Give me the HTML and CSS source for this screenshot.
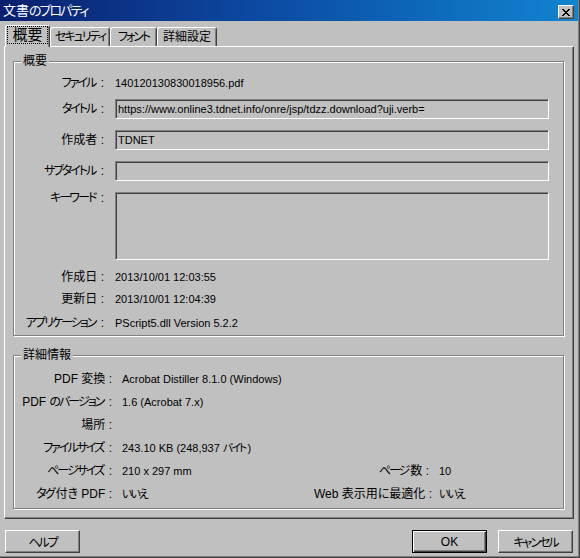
FILE: index.html
```html
<!DOCTYPE html>
<html lang="ja">
<head>
<meta charset="utf-8">
<title>文書のプロパティ</title>
<link rel="stylesheet" href="styles.css">
</head>
<body>
<div class="window">
  <div class="titlebar">
    <span class="title">文書<span class="k">のプロパティ</span></span>
    <span class="close"><svg width="8" height="7" viewBox="0 0 8 7" shape-rendering="crispEdges"><path fill="#000" d="M0 0h2v1H0z M6 0h2v1H6z M1 1h2v1H1z M5 1h2v1H5z M2 2h4v1H2z M3 3h2v1H3z M2 4h4v1H2z M1 5h2v1H1z M5 5h2v1H5z M0 6h2v1H0z M6 6h2v1H6z"/></svg></span>
  </div>
  <div class="content">
    <div class="tabs">
      <div class="tab t1 active"><span class="focus">概要</span></div>
      <div class="tab t2"><span class="k">セキュリティ</span></div>
      <div class="tab t3"><span class="k">フォント</span></div>
      <div class="tab t4">詳細設定</div>
    </div>
    <div class="panel">
      <fieldset class="group g1">
        <legend>概要</legend>
        <div class="row"><span class="lbl"><span class="k">ファイル</span> :</span><span class="val">140120130830018956.pdf</span></div>
        <div class="row r-title"><span class="lbl"><span class="k">タイトル</span> :</span><div class="field">https://www.online3.tdnet.info/onre/jsp/tdzz.download?uji.verb=</div></div>
        <div class="row r-gap9"><span class="lbl">作成者 :</span><div class="field">TDNET</div></div>
        <div class="row r-gap9"><span class="lbl"><span class="k">サブタイトル</span> :</span><div class="field"></div></div>
        <div class="row r-kw"><span class="lbl"><span class="k">キーワード</span> :</span><div class="field area"></div></div>
        <div class="row r-created"><span class="lbl">作成日 :</span><span class="val">2013/10/01 12:03:55</span></div>
        <div class="row"><span class="lbl">更新日 :</span><span class="val">2013/10/01 12:04:39</span></div>
        <div class="row r-app"><span class="lbl"><span class="k">アプリケーション</span> :</span><span class="val">PScript5.dll Version 5.2.2</span></div>
      </fieldset>
      <fieldset class="group g2">
        <legend>詳細情報</legend>
        <div class="row4"><span class="lbl">PDF 変換 :</span><span class="val span3">Acrobat Distiller 8.1.0 (Windows)</span></div>
        <div class="row4"><span class="lbl">PDF <span class="k">のバージョン</span> :</span><span class="val span3">1.6 (Acrobat 7.x)</span></div>
        <div class="row4"><span class="lbl">場所 :</span><span class="val span3"></span></div>
        <div class="row4"><span class="lbl"><span class="k">ファイルサイズ</span> :</span><span class="val span3">243.10 KB (248,937 <span class="k">バイト</span>)</span></div>
        <div class="row4"><span class="lbl"><span class="k">ページサイズ</span> :</span><span class="val">210 x 297 mm</span><span class="lbl"><span class="k">ページ</span>数 :</span><span class="val">10</span></div>
        <div class="row4"><span class="lbl"><span class="k">タグ</span>付き PDF :</span><span class="val"><span class="k">いいえ</span></span><span class="lbl">Web 表示用<span class="k">に</span>最適化 :</span><span class="val"><span class="k">いいえ</span></span></div>
      </fieldset>
    </div>
    <div class="buttons">
      <div class="btn"><span class="k">ヘルプ</span></div>
      <div class="btn default">OK</div>
      <div class="btn cancel"><span class="k">キャンセル</span></div>
    </div>
  </div>
</div>
</body>
</html>
```

FILE: styles.css
```css
* { box-sizing: border-box; }
html, body { margin: 0; padding: 0; }
body {
  width: 580px;
  height: 558px;
  overflow: hidden;
  background: #c0c0c0;
  font-family: "Liberation Sans", "Noto Sans CJK JP", sans-serif;
  font-size: 12px;
  color: #000;
  font-feature-settings: "palt";
}
.k { letter-spacing: -2px; margin-right: 2px; }
.window {
  width: 580px;
  height: 558px;
  background: #c0c0c0;
  box-shadow: inset -1px -1px 0 #404040, inset -2px -2px 0 #808080;
}
.titlebar {
  width: 578px;
  height: 21px;
  display: flex;
  align-items: center;
  background: linear-gradient(90deg, #0a1f6e 0%, #0c4fa8 50%, #1084d0 100%);
}
.title {
  flex: 1;
  margin-left: 3px;
  color: #fff;
  font-size: 13px;
  line-height: 16px;
  white-space: nowrap;
}
.close {
  width: 16px;
  height: 14px;
  margin: 3px 4px 0 0;
  background: #c0c0c0;
  border-top: 1px solid #fff;
  border-left: 1px solid #fff;
  border-right: 1px solid #404040;
  border-bottom: 1px solid #404040;
  box-shadow: inset -1px -1px 0 #808080;
  display: flex;
  align-items: center;
  justify-content: center;
}
.close svg { display: block; }
.content { padding-left: 4px; }
.tabs {
  display: flex;
  align-items: flex-end;
  height: 21px;
  margin-top: 4px;
  padding-left: 1px;
}
.tab {
  height: 19px;
  border-top: 1px solid #fff;
  border-left: 1px solid #fff;
  border-right: 1px solid #404040;
  box-shadow: inset -1px 0 0 #808080;
  border-radius: 3px 3px 0 0;
  display: flex;
  align-items: center;
  justify-content: center;
  font-size: 12px;
  line-height: 14px;
  white-space: nowrap;
  background: #c0c0c0;
}
.tab .k { margin-right: 0; }
.t1 { width: 45px; }
.t2 { width: 60px; }
.t3 { width: 47px; }
.t4 { width: 60px; }
.tab.active {
  height: 22px;
  margin-bottom: -1px;
  position: relative;
  z-index: 1;
  font-size: 15px;
  align-items: flex-start;
  padding-top: 1px;
}
.focus {
  outline: 1px dotted #000;
  padding: 0 4px;
  height: 16px;
  line-height: 16px;
}
.panel {
  width: 570px;
  height: 473px;
  background: #c0c0c0;
  border-top: 1px solid #fff;
  border-left: 1px solid #fff;
  border-right: 1px solid #404040;
  border-bottom: 1px solid #404040;
  box-shadow: inset -1px -1px 0 #808080;
  padding: 7px 9px 0 8px;
}
.group {
  margin: 0;
  min-width: 0;
  border: 1px solid #808080;
  box-shadow: inset 1px 1px 0 #fff, 1px 1px 0 #fff;
}
.group legend {
  margin-left: 7px;
  padding: 0 2px;
  font-size: 12px;
  line-height: 14px;
  background: #c0c0c0;
}
.g1 { padding: 4px 14px 1px 0; }
.g2 { padding: 5px 14px 3px 0; margin-top: 12px; }
.row {
  display: grid;
  grid-template-columns: 90px 1fr;
  column-gap: 11px;
  align-items: center;
  height: 22px;
}
.row4 {
  display: grid;
  grid-template-columns: 98px 182px 115px 1fr;
  column-gap: 10px;
  align-items: center;
  height: 23px;
}
.span3 { grid-column: 2 / 5; }
.lbl {
  text-align: right;
  white-space: nowrap;
  font-size: 12px;
  line-height: 14px;
}
.val {
  font-size: 11px;
  line-height: 14px;
  white-space: nowrap;
}
.field {
  height: 20px;
  border-top: 1px solid #808080;
  border-left: 1px solid #808080;
  border-bottom: 1px solid #fff;
  border-right: 1px solid #fff;
  box-shadow: inset 1px 1px 0 #404040;
  padding: 2px 0 0 2px;
  font-size: 11px;
  line-height: 15px;
  white-space: nowrap;
  overflow: hidden;
}
.r-title { margin-top: 4px; }
.r-gap9 { margin-top: 9px; }
.r-kw { margin-top: 10px; height: 68px; align-items: start; }
.r-kw .lbl { margin-top: -1px; }
.field.area { height: 68px; }
.r-created { margin-top: 6px; }
.r-app { margin-top: 2px; }
.buttons {
  display: flex;
  margin-top: 11px;
  padding: 0 7px 0 1px;
}
.btn {
  width: 75px;
  height: 23px;
  display: flex;
  align-items: center;
  justify-content: center;
  border-top: 1px solid #fff;
  border-left: 1px solid #fff;
  border-right: 1px solid #404040;
  border-bottom: 1px solid #404040;
  box-shadow: inset -1px -1px 0 #808080;
  font-size: 12px;
  white-space: nowrap;
}
.btn .k { margin-right: 0; }
.btn.default {
  margin-left: auto;
  border: 1px solid #000;
  box-shadow: inset 1px 1px 0 #fff, inset -1px -1px 0 #404040, inset -2px -2px 0 #808080;
}
.btn.cancel { margin-left: 11px; }
```
